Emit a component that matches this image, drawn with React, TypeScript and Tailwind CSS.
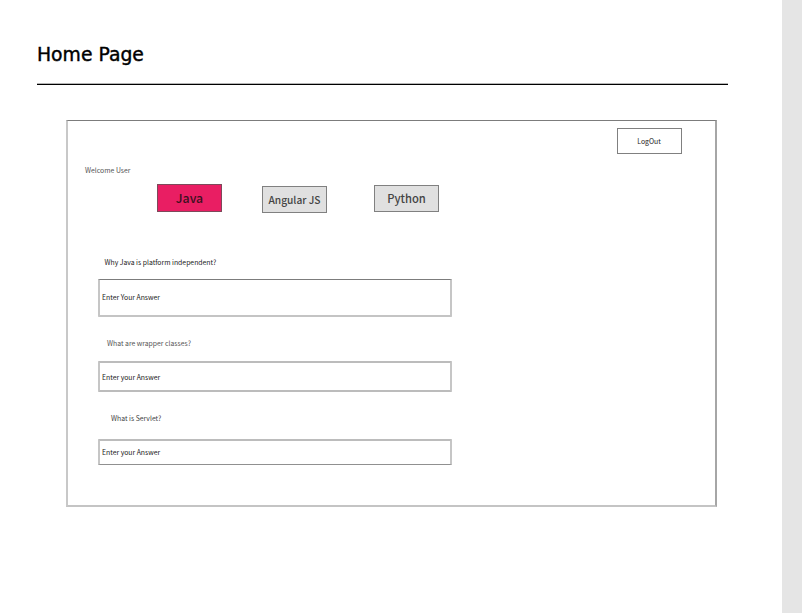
type AnswerProps = { question: string; hint: string; questionClass: string; boxClass: string };

function Answer({ question, hint, questionClass, boxClass }: AnswerProps) {
  return (
    <section className="flex flex-col">
      <p className={`h-[10px] text-[6.85px] leading-[10px] ${questionClass}`}>{question}</p>
      <div className={`flex w-[354px] items-center rounded-[1px] border-x-2 border-x-[#c6c6c6] pl-[2px] text-[6.85px] leading-[10px] text-[#222] ${boxClass}`}>
        {hint}
      </div>
    </section>
  );
}

export default function App() {
  return (
    <div className="flex h-[613px] w-[802px] overflow-hidden bg-white whitespace-nowrap">
      <main className="w-[782px] shrink-0 pl-[37px]">
        <header className="h-[85px] w-[691px] border-b border-black pt-[43px] shadow-[inset_0_-1px_0_#b5b5b5]">
          <h1 className="font-['DejaVu_Sans',sans-serif] text-[18.8px] leading-6 text-black [-webkit-text-stroke:0.4px_black]">
            Home Page
          </h1>
        </header>
        <div className="mt-[35px] ml-[29px] flex h-[387px] w-[651px] flex-col border-t border-r-2 border-b-2 border-l-2 border-t-[#7c7c7c] border-r-[#a6a6a6] border-b-[#c4c4c4] border-l-[#c8c8c8] font-['Noto_Sans_CJK_SC',sans-serif]">
          <div className="mt-[7px] ml-[549px] flex h-[26px] w-[65px] items-center justify-center border border-[#808080] pr-px text-[6.85px] text-[#222]">
            LogOut
          </div>
          <p className="mt-[11px] ml-[17px] h-[10px] text-[6.85px] leading-[10px] text-[#555]">Welcome User</p>
          <nav className="mt-[9px] ml-[89px] flex items-start font-medium">
            <button className="h-[28px] w-[65px] border border-[#7d4a5a] bg-[#e91e63] text-[12.3px] leading-[26px] text-[#3b1020]">Java</button>
            <button className="mt-[2px] ml-[40px] h-[27px] w-[65px] border border-[#808080] bg-[#e0e0e0] text-[10.2px] leading-[26px] text-[#444]">Angular JS</button>
            <button className="ml-[47px] mt-px h-[27px] w-[65px] border border-[#808080] bg-[#e0e0e0] text-[11.2px] leading-[25px] text-[#444]">Python</button>
          </nav>
          <div className="mt-[44px] ml-[30px] flex flex-col">
            <Answer question="Why Java is platform independent?" hint="Enter Your Answer" questionClass="ml-[6.5px] text-[#222]" boxClass="mt-[12px] h-[38px] border-t border-b-2 border-t-[#7c7c7c] border-b-[#c4c4c4] pb-px" />
            <Answer question="What are wrapper classes?" hint="Enter your Answer" questionClass="mt-[21px] ml-[9px] text-[#555]" boxClass="mt-[13px] h-[31px] border-t-2 border-b-2 border-y-[#bcbcbc]" />
            <Answer question="What is Servlet?" hint="Enter your Answer" questionClass="mt-[21px] ml-[13px] text-[#444]" boxClass="mt-[16px] h-[26px] border-t-2 border-b border-t-[#bcbcbc] border-b-[#909090] pb-[2px]" />
          </div>
        </div>
      </main>
      <aside className="w-[20px] shrink-0 bg-[#e5e5e5]" />
    </div>
  );
}
